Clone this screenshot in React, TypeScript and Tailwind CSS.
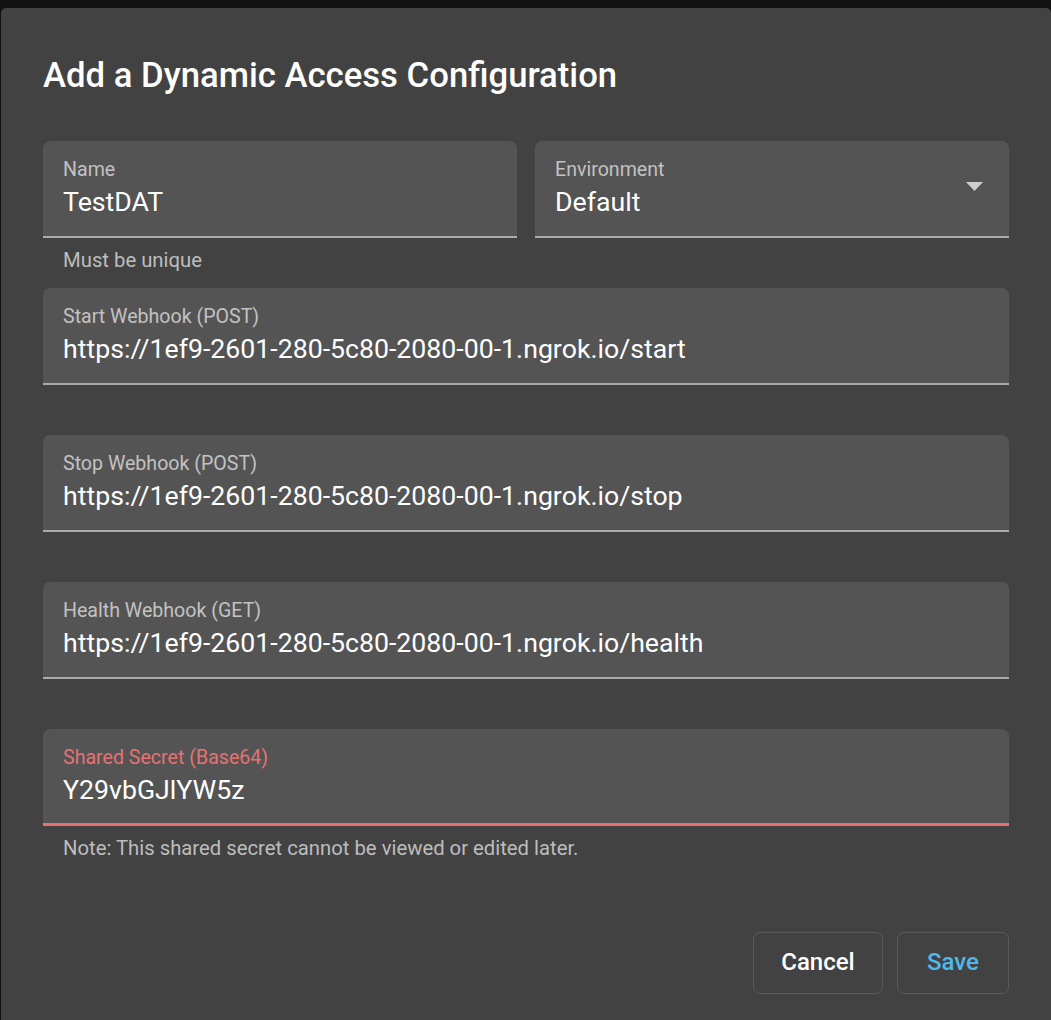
import React from "react";

type FieldProps = {
  label: string;
  value: string;
  helper?: string;
  select?: boolean;
  error?: boolean;
  className?: string;
};

function Field({ label, value, helper, select, error, className }: FieldProps) {
  return (
    <div className={className}>
      <div
        className={
          error
            ? "relative rounded-t-[7px] bg-[#545454] pl-[20px] pr-[20px] pt-[17px] pb-[17px] border-b-[3px] border-[#e57373]"
            : "relative rounded-t-[7px] bg-[#545454] pl-[20px] pr-[20px] pt-[17px] pb-[18px] border-b-2 border-[#ababab]"
        }
      >
        <div
          className={
            error
              ? "text-[19.6px] leading-[24px] text-[#e57373] whitespace-nowrap"
              : "text-[19.6px] leading-[24px] text-[#c2c2c2] whitespace-nowrap"
          }
        >
          {label}
        </div>
        <div className="mt-[4px] text-[26.7px] leading-[32px] text-white whitespace-nowrap">
          {value}
        </div>
        {select && (
          <svg
            className="absolute right-[26px] top-[41px]"
            width="17"
            height="9"
            viewBox="0 0 17 9"
          >
            <path d="M0 0 L17 0 L8.5 9 Z" fill="#cfcfcf" />
          </svg>
        )}
      </div>
      <div className="h-[50px] pt-[10px] pl-[20px] text-[20.3px] leading-[24px] text-[#bdbdbd] whitespace-nowrap">
        {helper}
      </div>
    </div>
  );
}

export default function App() {
  return (
    <div className="w-[1051px] h-[1020px] bg-[#121212] overflow-hidden pt-[8px] pl-[1px] font-['Roboto',sans-serif]">
      <div className="w-[1050px] h-[1100px] bg-[#424242] rounded-[5px] pl-[42px] pr-[42px] pt-[46px]">
        <h2 className="text-[34.7px] leading-[42px] font-medium text-white whitespace-nowrap">
          Add a Dynamic Access Configuration
        </h2>
        <div className="mt-[45px] flex gap-[18px]">
          <Field className="flex-1" label="Name" value="TestDAT" helper="Must be unique" />
          <Field className="flex-1" label="Environment" value="Default" select />
        </div>
        <Field
          label="Start Webhook (POST)"
          value="https://1ef9-2601-280-5c80-2080-00-1.ngrok.io/start"
        />
        <Field
          label="Stop Webhook (POST)"
          value="https://1ef9-2601-280-5c80-2080-00-1.ngrok.io/stop"
        />
        <Field
          label="Health Webhook (GET)"
          value="https://1ef9-2601-280-5c80-2080-00-1.ngrok.io/health"
        />
        <Field
          label="Shared Secret (Base64)"
          value="Y29vbGJlYW5z"
          error
          helper="Note: This shared secret cannot be viewed or edited later."
        />
        <div className="mt-[56px] flex justify-end gap-[14px]">
          <button className="w-[130px] h-[62px] rounded-[7px] border border-[#5a5a5a] text-[24px] leading-[28px] font-medium text-white pb-[2px]">
            Cancel
          </button>
          <button className="w-[112px] h-[62px] rounded-[7px] border border-[#5a5a5a] text-[24px] leading-[28px] font-medium text-[#4fb8ec] pb-[2px]">
            Save
          </button>
        </div>
      </div>
    </div>
  );
}
